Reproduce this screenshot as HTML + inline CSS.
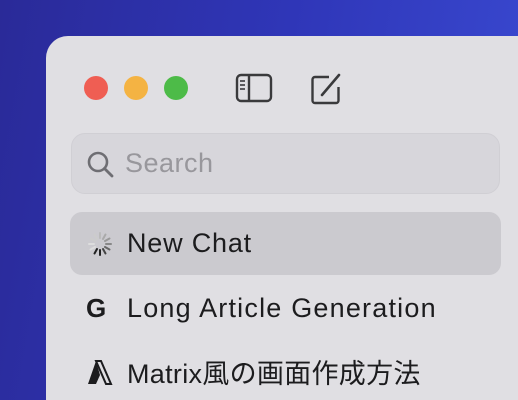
<!DOCTYPE html>
<html><head><meta charset="utf-8"><style>
html,body{margin:0;width:518px;height:400px;overflow:hidden;}
body{position:relative;background:linear-gradient(100deg,#2a2a98 0%,#2f36b8 50%,#3a4ad2 100%);font-family:"Liberation Sans","Noto Sans CJK JP",sans-serif;}
.win{position:absolute;left:46px;top:36px;width:472px;height:364px;background:#e0dfe3;border-radius:22px 0 0 0;}
.dot{position:absolute;top:76px;width:24px;height:24px;border-radius:50%;}
.search{position:absolute;left:71px;top:133px;width:429px;height:61px;background:#d7d6db;border:1px solid #d0cfd4;border-radius:14px;box-sizing:border-box;}
.row{position:absolute;left:70px;width:431px;height:63px;border-radius:12px;}
.t{position:absolute;left:127px;font-size:27px;letter-spacing:1.2px;color:#1c1c1e;white-space:nowrap;}
</style></head><body>
<div class="win"></div>
<div class="dot" style="left:84px;background:#ef5e53"></div>
<div class="dot" style="left:124px;background:#f4b343"></div>
<div class="dot" style="left:164px;background:#4dbb48"></div>
<svg style="position:absolute;left:235px;top:73px" width="40" height="32" viewBox="0 0 40 32"><rect x="2" y="2" width="34" height="26" rx="4" fill="none" stroke="#3a3a3c" stroke-width="2.4"/><line x1="14" y1="2" x2="14" y2="28" stroke="#3a3a3c" stroke-width="2.4"/><g stroke="#3a3a3c" stroke-width="1.6"><line x1="5" y1="8" x2="10" y2="8"/><line x1="5" y1="12" x2="10" y2="12"/><line x1="5" y1="16" x2="10" y2="16"/></g></svg>
<svg style="position:absolute;left:309px;top:70px" width="36" height="36" viewBox="0 0 36 36"><path d="M20 7H6a2.5 2.5 0 0 0-2.5 2.5v21A2.5 2.5 0 0 0 6 33h21a2.5 2.5 0 0 0 2.5-2.5V17" fill="none" stroke="#3a3a3c" stroke-width="2.4"/><path d="M13 25L30 5" stroke="#3a3a3c" stroke-width="2.6" stroke-linecap="round"/></svg>
<div class="search"></div>
<svg style="position:absolute;left:86px;top:150px" width="30" height="30" viewBox="0 0 30 30"><circle cx="12" cy="12" r="9" fill="none" stroke="#6e6e73" stroke-width="2.6"/><line x1="18.5" y1="18.5" x2="26" y2="26" stroke="#6e6e73" stroke-width="2.8" stroke-linecap="round"/></svg>
<div class="t" style="left:125px;top:148px;font-size:27px;letter-spacing:0.5px;color:#98979c">Search</div>
<div class="row" style="top:212px;background:#cbcacf"></div>
<svg style="position:absolute;left:86px;top:230px" width="28" height="28" viewBox="0 0 28 28"><g stroke-width="2" stroke-linecap="round"><line x1="14" y1="3" x2="14" y2="8" stroke="#bbb"/><line x1="19.5" y1="4.5" x2="17" y2="9" stroke="#aaa"/><line x1="23.5" y1="8.5" x2="19" y2="11" stroke="#999"/><line x1="25" y1="14" x2="20" y2="14" stroke="#888"/><line x1="23.5" y1="19.5" x2="19" y2="17" stroke="#666"/><line x1="19.5" y1="23.5" x2="17" y2="19" stroke="#444"/><line x1="14" y1="25" x2="14" y2="20" stroke="#222"/><line x1="8.5" y1="23.5" x2="11" y2="19" stroke="#222"/><line x1="4.5" y1="19.5" x2="9" y2="17" stroke="#ddd"/><line x1="3" y1="14" x2="8" y2="14" stroke="#ddd"/><line x1="4.5" y1="8.5" x2="9" y2="11" stroke="#ccc"/><line x1="8.5" y1="4.5" x2="11" y2="9" stroke="#ccc"/></g></svg>
<div class="t" style="top:228px;letter-spacing:0.8px">New Chat</div>
<div class="t" style="left:86px;top:293px;font-weight:bold;font-size:26px;letter-spacing:0">G</div>
<div class="t" style="top:293px">Long Article Generation</div>
<svg style="position:absolute;left:87px;top:360px" width="26" height="25" viewBox="0 0 26 25"><path d="M9 1h5l10 23h-5z" fill="none" stroke="#1c1c1e" stroke-width="2"/><path d="M9 1L1 24h8l4-9z" fill="#1c1c1e"/></svg>
<div class="t" style="top:352px;letter-spacing:0.3px">Matrix風の画面作成方法</div>
</body></html>
